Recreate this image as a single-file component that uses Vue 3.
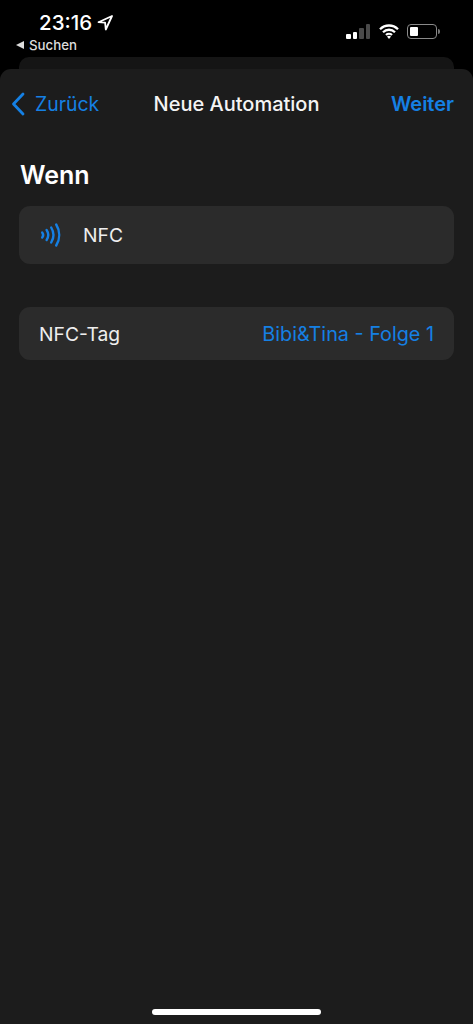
<template>
  <div class="screen">
    <header class="status">
      <div class="status-left">
        <div class="time-row">
          <span class="time">23:16</span>
          <svg class="loc" width="16" height="16" viewBox="0 0 16 16"><path d="M15 1 1.500 7.200l6.600.5.7 6.800z" fill="none" stroke="#fff" stroke-width="1.800" stroke-linejoin="round"/></svg>
        </div>
        <div class="back-app"><span class="tri"></span>Suchen</div>
      </div>
      <div class="status-right">
        <div class="signal">
          <i v-for="bar in bars" :key="bar.h" :class="{ off: bar.off }" :style="{ height: bar.h + 'px' }"></i>
        </div>
        <svg width="20" height="15" viewBox="0 0 20 15">
          <path d="M1 5.200a12.800 12.800 0 0 1 18 0M4 8.200a8.600 8.600 0 0 1 12 0M7 11a4.400 4.400 0 0 1 6 0" fill="none" stroke="#fff" stroke-width="2.300"/>
          <path d="M10 15l-2-2.400a3 3 0 0 1 4 0z" fill="#fff"/>
        </svg>
        <div class="battery"><div class="level"></div></div>
        <span class="cap"></span>
      </div>
    </header>
    <div class="back-sheet"></div>
    <main class="sheet">
      <nav class="nav">
        <div class="nav-back">
          <svg width="14" height="24" viewBox="0 0 14 24"><path d="M12 2 2.500 12 12 22" fill="none" stroke="#1580e4" stroke-width="2.800" stroke-linecap="round" stroke-linejoin="round"/></svg>
          <span>Zurück</span>
        </div>
        <div class="nav-title">Neue Automation</div>
        <div class="nav-next">Weiter</div>
      </nav>
      <h1 class="heading">Wenn</h1>
      <div class="card card-nfc">
        <svg class="nfc" width="22" height="26" viewBox="0 0 22 26">
          <g fill="none" stroke="#1580e4" stroke-width="2.400" stroke-linecap="round">
            <path d="M2.200 10.500a4 4 0 0 1 0 5"/>
            <path d="M6.600 8a9 9 0 0 1 0 10"/>
            <path d="M11.200 5.500a14.500 14.500 0 0 1 0 15"/>
            <path d="M16.200 2.500a20 20 0 0 1 0 21"/>
          </g>
        </svg>
        <span>NFC</span>
      </div>
      <div class="card card-tag">
        <span>NFC-Tag</span>
        <span class="value">Bibi&amp;Tina - Folge 1</span>
      </div>
    </main>
    <div class="home-bar"></div>
  </div>
</template>

<script setup>
const bars = [
  { h: 5 },
  { h: 7 },
  { h: 11, off: true },
  { h: 15, off: true }
]
</script>

<style>
html, body {
  margin: 0;
  background: #000;
}
</style>

<style scoped>
.screen {
  position: relative;
  width: 473px;
  height: 1024px;
  display: flex;
  flex-direction: column;
  overflow: hidden;
  background: #000;
  color: #fff;
  font-family: Inter, "Liberation Sans", sans-serif;
}
.status {
  height: 57px;
  display: flex;
  justify-content: space-between;
  flex-shrink: 0;
}
.status-left {
  padding: 12px 0 0 16px;
}
.time-row {
  display: flex;
  align-items: center;
  gap: 5px;
  padding-left: 23px;
  height: 20px;
}
.time {
  font-size: 20.500px;
  font-weight: 500;
}
.loc {
  margin-top: 1px;
}
.back-app {
  display: flex;
  align-items: center;
  gap: 5px;
  margin-top: 5px;
  font-size: 13.300px;
  font-weight: 500;
  color: #ddd;
}
.tri {
  width: 0;
  height: 0;
  border-style: solid;
  border-width: 4px 8px 4px 0;
  border-color: transparent #ddd transparent transparent;
}
.status-right {
  display: flex;
  align-items: center;
  height: 20px;
  margin-top: 21px;
  padding-right: 33px;
}
.signal {
  display: flex;
  align-items: flex-end;
  gap: 2px;
  height: 15px;
  margin-right: 9px;
}
.signal i {
  width: 4.500px;
  border-radius: 1px;
  background: #fff;
}
.signal i.off {
  background: #4a4a4a;
}
.battery {
  width: 30px;
  height: 15px;
  margin-left: 8px;
  padding: 2px;
  box-sizing: border-box;
  border: 1px solid #8a8a8a;
  border-radius: 4px;
}
.level {
  width: 8px;
  height: 100%;
  background: #fff;
  border-radius: 1px;
}
.cap {
  width: 2px;
  height: 5px;
  margin-left: 1px;
  border-radius: 0 2px 2px 0;
  background: #777;
}
.back-sheet {
  height: 12px;
  margin: 0 19px;
  flex-shrink: 0;
  background: #151515;
  border-radius: 10px 10px 0 0;
}
.sheet {
  flex: 1;
  background: #1c1c1c;
  border-radius: 11px 11px 0 0;
  padding: 0 19px;
}
.nav {
  display: grid;
  grid-template-columns: 1fr auto 1fr;
  align-items: center;
  height: 69px;
}
.nav-back {
  display: flex;
  align-items: center;
  gap: 10px;
  margin-left: -8px;
  color: #1580e4;
  font-size: 19.400px;
}
.nav-title {
  font-weight: 500;
  font-size: 20px;
  color: #f4f4f4;
}
.nav-next {
  justify-self: end;
  color: #1580e4;
  font-size: 20px;
  font-weight: 600;
}
.heading {
  margin: 22px 0 16px 1px;
  font-size: 25px;
  line-height: 30px;
  font-weight: 600;
}
.card {
  display: flex;
  align-items: center;
  background: #2b2b2b;
  border-radius: 11px;
  font-size: 19.300px;
  color: #eee;
}
.card-nfc {
  height: 58px;
  padding-left: 21px;
  gap: 21px;
}
.card-tag {
  height: 53px;
  margin-top: 43px;
  padding: 0 20px;
  justify-content: space-between;
}
.value {
  color: #1580e4;
  font-size: 19.800px;
}
.home-bar {
  position: absolute;
  left: 152px;
  bottom: 9px;
  width: 169px;
  height: 6px;
  border-radius: 3px;
  background: #fff;
}
</style>
